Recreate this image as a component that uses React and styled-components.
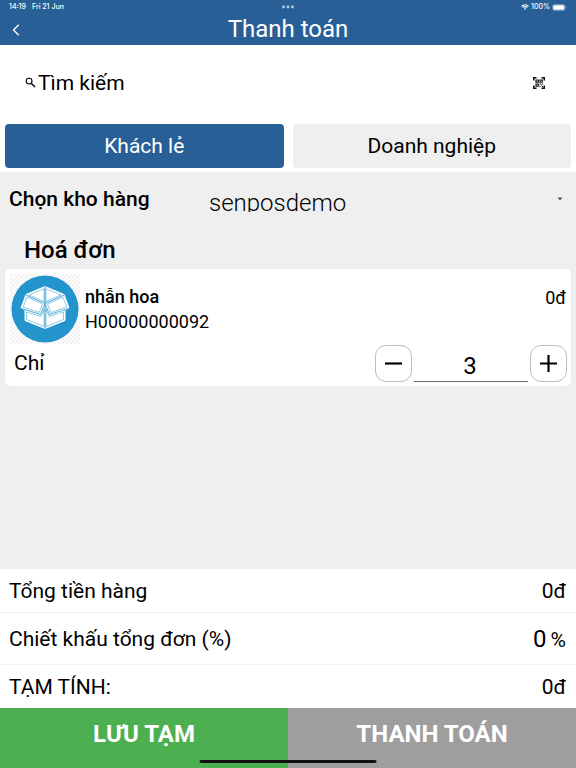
import React, { useState } from "react";
import styled, { createGlobalStyle, css } from "styled-components";

const BLUE = "#295f97";
const GREY = "#efefef";

const GlobalStyle = createGlobalStyle`
  *, *::before, *::after { box-sizing: border-box; }
  body {
    margin: 0;
    background: ${GREY};
    color: #000;
    font-family: Roboto, "Noto Sans", sans-serif;
    font-size: 21px;
    line-height: 26px;
  }
  button, input, select { font: inherit; color: inherit; margin: 0; }
  h1, h2, h3, p { margin: 0; font-weight: 400; }
`;

const Screen = styled.div`
  display: flex;
  flex-direction: column;
  min-height: 100vh;
  background: ${GREY};
`;

const Header = styled.header`
  background: ${BLUE};
  color: #fff;
`;

const StatusBar = styled.div`
  display: grid;
  grid-template-columns: 1fr auto 1fr;
  align-items: center;
  height: 14px;
  padding: 0 9px;
  font-family: Inter, sans-serif;
  font-size: 7px;
  font-weight: 500;
  line-height: 14px;
`;

const StatusGroup = styled.div`
  display: flex;
  align-items: center;
  gap: ${(p) => p.$gap}px;
  justify-content: ${(p) => (p.$end ? "flex-end" : "flex-start")};
`;

const TitleBar = styled.div`
  display: grid;
  grid-template-columns: 48px 1fr 48px;
  align-items: center;
  height: 31px;
`;

const BackButton = styled.button`
  display: flex;
  align-items: center;
  height: 31px;
  padding: 0 0 0 11px;
  border: 0;
  background: none;
`;

const Title = styled.h1`
  font-size: 24px;
  line-height: 31px;
  text-align: center;
`;

const SearchBar = styled.div`
  display: flex;
  align-items: center;
  height: 79px;
  padding: 0 31px 4px 25px;
  background: #fff;
`;

const SearchInput = styled.input`
  flex: 1;
  min-width: 0;
  height: 32px;
  padding: 0 0 0 2px;
  border: 0;
  outline: 0;
  background: none;
  &::placeholder { color: #000; opacity: 1; }
`;

const IconButton = styled.button`
  display: flex;
  padding: 0;
  border: 0;
  background: none;
`;

const Tabs = styled.div`
  display: grid;
  grid-template-columns: 1fr 1fr;
  gap: 9px;
  padding: 0 5px 4px;
  background: #fff;
`;

const Tab = styled.button`
  height: 44px;
  padding: 0;
  border: 0;
  border-radius: 4px;
  background: ${(p) => (p.$active ? BLUE : GREY)};
  color: ${(p) => (p.$active ? "#fff" : "#000")};
`;

const WarehouseRow = styled.div`
  display: flex;
  height: 64px;
  padding: 14px 13px 0 9px;
`;

const WarehouseLabel = styled.label`
  width: 200px;
  font-weight: 500;
`;

const SelectClip = styled.div`
  display: flex;
  flex: 1;
  min-width: 0;
  height: 26px;
  overflow: hidden;
`;

const WarehouseSelect = styled.select`
  flex: 1;
  min-width: 0;
  height: 34px;
  padding: 0;
  border: 0;
  outline: 0;
  appearance: none;
  background: none;
  font-size: 24px;
  font-weight: 300;
  line-height: 34px;
`;

const InvoiceTitle = styled.h2`
  padding: 0 24px 5px;
  font-size: 24px;
  font-weight: 500;
  line-height: 28px;
`;

const Card = styled.article`
  margin: 0 5px;
  padding: 5px 4px 4px 5px;
  border-radius: 5px;
  background: #fff;
`;

const ProductRow = styled.div`
  display: flex;
  gap: 5px;
`;

const ProductText = styled.div`
  flex: 1;
  padding-top: 10px;
  font-size: 18px;
  line-height: 25px;
`;

const ProductName = styled.h3`
  font-size: 18px;
  line-height: 25px;
  font-weight: 500;
`;

const Price = styled.p`
  padding-top: 11px;
  padding-right: 1px;
  font-size: 18px;
  line-height: 25px;
`;

const QuantityRow = styled.div`
  display: flex;
  align-items: center;
  gap: 2px;
  height: 38px;
  padding-left: 4px;
`;

const Unit = styled.span`
  flex: 1;
`;

const StepButton = styled.button`
  display: flex;
  align-items: center;
  justify-content: center;
  width: 37px;
  height: 37px;
  padding: 0;
  border: 1px solid #bdbdbd;
  border-radius: 11px;
  background: #fff;
`;

const QuantityInput = styled.input`
  width: 114px;
  height: 37px;
  padding: 7px 2px 0 0;
  border: 0;
  border-bottom: 1px solid #666;
  outline: 0;
  background: none;
  font-size: 24px;
  text-align: center;
`;

const Totals = styled.section`
  margin-top: auto;
  background: #fff;
`;

const TotalRow = styled.div`
  display: flex;
  align-items: center;
  justify-content: space-between;
  height: ${(p) => (p.$tall ? 52 : 44)}px;
  padding: 0 10px 0 9px;
  border-bottom: 1px solid #f2f2f2;
  ${(p) => p.$last && css`
    height: 43px;
    border-bottom: 0;
  `}
`;

const Percent = styled.span`
  display: flex;
  align-items: baseline;
  gap: 4px;
  padding-top: 2px;
`;

const PercentInput = styled.input`
  width: 60px;
  height: 26px;
  padding: 0;
  border: 0;
  outline: 0;
  background: none;
  font-size: 24px;
  text-align: right;
`;

const Footer = styled.footer`
  position: relative;
  display: grid;
  grid-template-columns: 1fr 1fr;
`;

const ActionButton = styled.button`
  height: 60px;
  padding: 0 0 8px;
  border: 0;
  background: ${(p) => (p.$muted ? "#9e9e9e" : "#4caf50")};
  color: #fff;
  font-size: 24px;
  font-weight: 700;
`;

const HomeIndicator = styled.div`
  position: absolute;
  bottom: 5px;
  left: 50%;
  width: 177px;
  height: 3px;
  border-radius: 2px;
  background: #111;
  transform: translateX(-50%);
`;

function DotsIcon() {
  return (
    <svg width="14" height="4" fill="#b5d2f0" aria-hidden="true">
      <circle cx="2.5" cy="2" r="1.4" />
      <circle cx="7" cy="2" r="1.4" />
      <circle cx="11.5" cy="2" r="1.4" />
    </svg>
  );
}

function WifiIcon() {
  return (
    <svg width="8" height="6" viewBox="0 0 16 12" fill="none" stroke="#fff" strokeWidth="2.3" aria-hidden="true">
      <path d="M1 4.5C5 .6 11 .6 15 4.5M3.7 7.3c2.5-2.3 6.1-2.3 8.6 0" />
      <path d="M8 12 5.6 9.5a3.4 3.4 0 0 1 4.8 0z" fill="#fff" stroke="none" />
    </svg>
  );
}

function BatteryIcon() {
  return (
    <svg width="15" height="7" aria-hidden="true">
      <rect x=".5" y=".5" width="12.5" height="6" rx="1.8" fill="none" stroke="#9cbad9" strokeWidth=".6" />
      <rect x="1.3" y="1.2" width="11" height="4.6" rx="1" fill="#fff" />
      <path d="M13.8 2.4c.9.4.9 1.8 0 2.2z" fill="#9cbad9" />
    </svg>
  );
}

function BackIcon() {
  return (
    <svg width="10" height="12" fill="none" stroke="#fff" strokeWidth="1.3" aria-hidden="true">
      <path d="M7.7 .8 2.5 6l5.2 5.200" />
    </svg>
  );
}

function SearchIcon() {
  return (
    <svg width="11" height="11" fill="none" stroke="#000" aria-hidden="true">
      <circle cx="4.1" cy="4.1" r="2.9" strokeWidth="1.1" />
      <path d="m6.4 6.4 3.7 3.7" strokeWidth="1.4" />
    </svg>
  );
}

function ScanIcon() {
  return (
    <svg width="12" height="12" viewBox="0 0 24 24" fill="none" stroke="#111" strokeWidth="2.4" aria-hidden="true">
      <path d="M1.500 7V1.500H7M17 1.500h5.500V7M22.500 17v5.500H17M7 22.500H1.500V17" strokeWidth="3" />
      <path d="M6 6h4.500v4.500H6zM14 6h4.500v4.500H14zM6 14h4.500v4.500H6z" />
      <path d="M13 13h2.500v2.500H13zm3 2h2v2h-2zm-3 3h2v2h-2zm5-5h2v2h-2zm0 5h2v2h-2z" fill="#111" stroke="none" />
    </svg>
  );
}

function CaretIcon() {
  return (
    <svg width="6" height="26" aria-hidden="true">
      <path d="M.5 11.500h5l-2.500 3z" fill="#555" />
    </svg>
  );
}

function BoxPicture() {
  return (
    <svg width="70" height="70" viewBox="0 0 70 70" role="img" aria-label="nhẫn hoa">
      <defs>
        <pattern id="checks" width="4" height="4" patternUnits="userSpaceOnUse">
          <rect width="4" height="4" fill="#fcfcfc" />
          <path d="M0 0h2v2H0zM2 2h2v2H2z" fill="#f3f3f3" />
        </pattern>
      </defs>
      <rect width="70" height="70" fill="url(#checks)" />
      <circle cx="35" cy="35" r="33.5" fill="#2494cc" />
      <path
        d="M35 12.500 54 20.500 59 34 55 36V46.500L35 54.500 15 46.500V36L11 34 16 20.500z"
        fill="#fff"
        stroke="#fff"
        strokeLinejoin="round"
      />
      <g fill="none" stroke="#2494cc" strokeWidth=".5" strokeLinejoin="round">
        <path d="M16 21 35 29.500 54 21M35 29.500 30.500 40.500 11.500 34.500M35 29.500 39.500 40.500 58.500 34.500" strokeWidth=".8" />
        <path d="m17 23 15.500 7-3.300 8.500L13.300 33zM53 23l-15.500 7 3.300 8.500L56.700 33z" />
        <path d="m19 20.800 15-6v12.700zM51 20.800l-15-6v12.700z" />
        <path d="M35 12.500V29.500M35 31v23.500" strokeWidth=".9" />
        <path d="m16.500 38 14.500 4.500 3-7.500v17.500l-17.500-7zM53.500 38 39 42.500 36 35v17.500l17.500-7z" />
      </g>
    </svg>
  );
}

function StepIcon({ plus }) {
  return (
    <svg width="19" height="19" stroke="#000" strokeWidth="2.2" aria-hidden="true">
      <path d={plus ? "M1 9.500h17M9.500 1v17" : "M1 9.500h17"} />
    </svg>
  );
}

export default function App() {
  const [customer, setCustomer] = useState("retail");
  const [quantity, setQuantity] = useState(3);
  const [discount, setDiscount] = useState("0");

  return (
    <Screen>
      <GlobalStyle />
      <Header>
        <StatusBar>
          <StatusGroup $gap={6}>
            <span>14:19</span>
            <span>Fri 21 Jun</span>
          </StatusGroup>
          <DotsIcon />
          <StatusGroup $gap={2} $end>
            <WifiIcon />
            <span>100%</span>
            <BatteryIcon />
          </StatusGroup>
        </StatusBar>
        <TitleBar>
          <BackButton type="button" aria-label="Quay lại">
            <BackIcon />
          </BackButton>
          <Title>Thanh toán</Title>
        </TitleBar>
      </Header>

      <SearchBar>
        <SearchIcon />
        <SearchInput type="text" placeholder="Tìm kiếm" aria-label="Tìm kiếm" />
        <IconButton type="button" aria-label="Quét mã">
          <ScanIcon />
        </IconButton>
      </SearchBar>

      <Tabs>
        <Tab type="button" $active={customer === "retail"} onClick={() => setCustomer("retail")}>
          Khách lẻ
        </Tab>
        <Tab type="button" $active={customer === "business"} onClick={() => setCustomer("business")}>
          Doanh nghiệp
        </Tab>
      </Tabs>

      <WarehouseRow>
        <WarehouseLabel htmlFor="warehouse">Chọn kho hàng</WarehouseLabel>
        <SelectClip>
          <WarehouseSelect id="warehouse" defaultValue="senposdemo">
            <option value="senposdemo">senposdemo</option>
          </WarehouseSelect>
          <CaretIcon />
        </SelectClip>
      </WarehouseRow>

      <InvoiceTitle>Hoá đơn</InvoiceTitle>
      <Card>
        <ProductRow>
          <BoxPicture />
          <ProductText>
            <ProductName>nhẫn hoa</ProductName>
            <p>H00000000092</p>
          </ProductText>
          <Price>0đ</Price>
        </ProductRow>
        <QuantityRow>
          <Unit>Chỉ</Unit>
          <StepButton type="button" aria-label="Giảm" onClick={() => setQuantity(Math.max(0, quantity - 1))}>
            <StepIcon />
          </StepButton>
          <QuantityInput
            type="text"
            inputMode="numeric"
            aria-label="Số lượng"
            value={quantity}
            onChange={(e) => setQuantity(Number(e.target.value) || 0)}
          />
          <StepButton type="button" aria-label="Tăng" onClick={() => setQuantity(quantity + 1)}>
            <StepIcon plus />
          </StepButton>
        </QuantityRow>
      </Card>

      <Totals>
        <TotalRow>
          <span>Tổng tiền hàng</span>
          <span>0đ</span>
        </TotalRow>
        <TotalRow $tall>
          <label htmlFor="discount">Chiết khấu tổng đơn (%)</label>
          <Percent>
            <PercentInput
              id="discount"
              type="text"
              inputMode="decimal"
              value={discount}
              onChange={(e) => setDiscount(e.target.value)}
            />
            <span>%</span>
          </Percent>
        </TotalRow>
        <TotalRow $last>
          <span>TẠM TÍNH:</span>
          <span>0đ</span>
        </TotalRow>
      </Totals>

      <Footer>
        <ActionButton type="button">LƯU TẠM</ActionButton>
        <ActionButton type="button" $muted>
          THANH TOÁN
        </ActionButton>
        <HomeIndicator />
      </Footer>
    </Screen>
  );
}
